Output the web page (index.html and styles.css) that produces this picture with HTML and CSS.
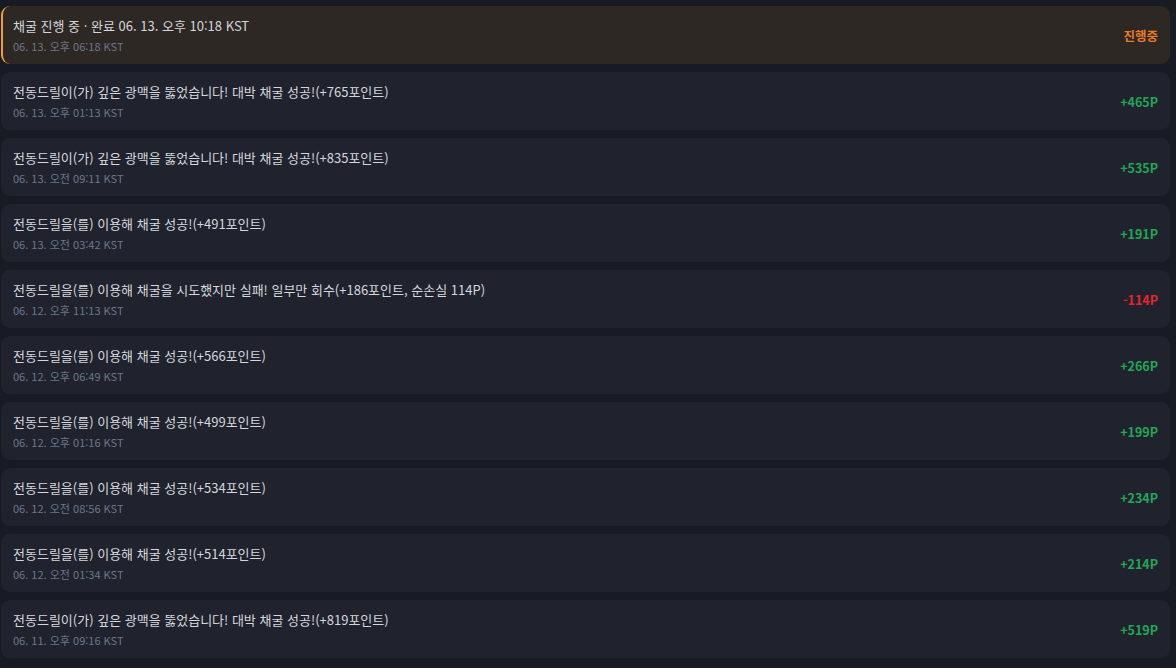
FILE: index.html
```html
<!DOCTYPE html>
<html lang="ko">
<head>
<meta charset="utf-8">
<link rel="stylesheet" href="styles.css">
</head>
<body>
<div class="list">
  <div class="item active">
    <div class="info"><div class="title">채굴 진행 중 · 완료 06. 13. 오후 10:18 KST</div><div class="date">06. 13. 오후 06:18 KST</div></div>
    <div class="amt orange">진행중</div>
  </div>
  <div class="item">
    <div class="info"><div class="title">전동드릴이(가) 깊은 광맥을 뚫었습니다! 대박 채굴 성공!(+765포인트)</div><div class="date">06. 13. 오후 01:13 KST</div></div>
    <div class="amt green">+465P</div>
  </div>
  <div class="item">
    <div class="info"><div class="title">전동드릴이(가) 깊은 광맥을 뚫었습니다! 대박 채굴 성공!(+835포인트)</div><div class="date">06. 13. 오전 09:11 KST</div></div>
    <div class="amt green">+535P</div>
  </div>
  <div class="item">
    <div class="info"><div class="title">전동드릴을(를) 이용해 채굴 성공!(+491포인트)</div><div class="date">06. 13. 오전 03:42 KST</div></div>
    <div class="amt green">+191P</div>
  </div>
  <div class="item">
    <div class="info"><div class="title">전동드릴을(를) 이용해 채굴을 시도했지만 실패! 일부만 회수(+186포인트, 순손실 114P)</div><div class="date">06. 12. 오후 11:13 KST</div></div>
    <div class="amt red">-114P</div>
  </div>
  <div class="item">
    <div class="info"><div class="title">전동드릴을(를) 이용해 채굴 성공!(+566포인트)</div><div class="date">06. 12. 오후 06:49 KST</div></div>
    <div class="amt green">+266P</div>
  </div>
  <div class="item">
    <div class="info"><div class="title">전동드릴을(를) 이용해 채굴 성공!(+499포인트)</div><div class="date">06. 12. 오후 01:16 KST</div></div>
    <div class="amt green">+199P</div>
  </div>
  <div class="item">
    <div class="info"><div class="title">전동드릴을(를) 이용해 채굴 성공!(+534포인트)</div><div class="date">06. 12. 오전 08:56 KST</div></div>
    <div class="amt green">+234P</div>
  </div>
  <div class="item">
    <div class="info"><div class="title">전동드릴을(를) 이용해 채굴 성공!(+514포인트)</div><div class="date">06. 12. 오전 01:34 KST</div></div>
    <div class="amt green">+214P</div>
  </div>
  <div class="item">
    <div class="info"><div class="title">전동드릴이(가) 깊은 광맥을 뚫었습니다! 대박 채굴 성공!(+819포인트)</div><div class="date">06. 11. 오후 09:16 KST</div></div>
    <div class="amt green">+519P</div>
  </div>
</div>
</body>
</html>
```
FILE: styles.css
```css
html, body {
  margin: 0;
  padding: 0;
  background: #181b24;
  height: 100%;
  overflow: hidden;
}
body {
  font-family: "Noto Sans CJK KR", "Noto Sans", sans-serif;
}
.list {
  display: flex;
  flex-direction: column;
  gap: 8px;
  padding: 6px 6px 0 1px;
}
.item {
  display: flex;
  align-items: center;
  justify-content: space-between;
  background: #20232e;
  border-radius: 9px;
  padding: 0 12px 0 12px;
  height: 58px;
  box-sizing: border-box;
}
.item.active {
  background: #2d2824;
  border-left: 2px solid #f0a030;
  padding-left: 10px;
}
.info {
  display: flex;
  flex-direction: column;
  gap: 4px;
  margin-top: 0;
}
.title {
  font-size: 13px;
  line-height: 18px;
  color: #d4d7dd;
}
.date {
  font-size: 11px;
  line-height: 15px;
  color: #6d7789;
}
.amt {
  font-size: 12.5px;
  font-weight: 700;
  margin-top: 0;
}
.orange { color: #e8782a; }
.green { color: #25a458; }
.red { color: #e1262f; }
```
